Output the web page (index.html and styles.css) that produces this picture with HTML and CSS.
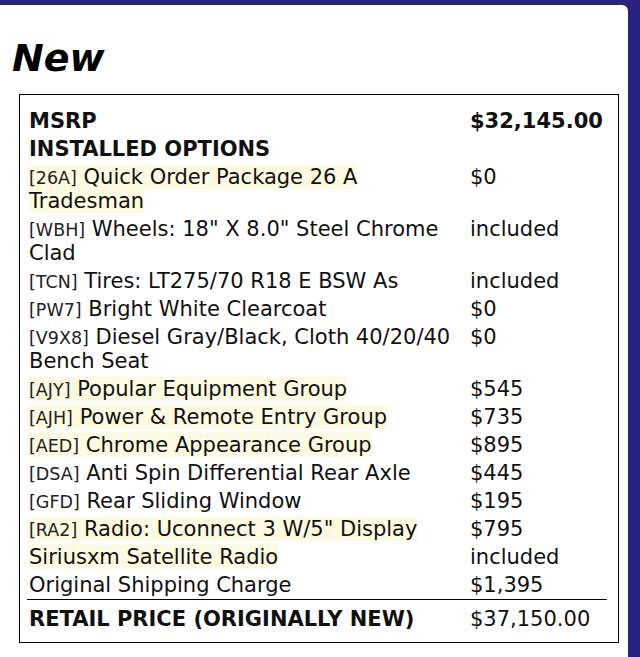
FILE: index.html
```html
<!DOCTYPE html>
<html>
<head>
<meta charset="utf-8">
<link rel="stylesheet" href="styles.css">
</head>
<body>
<div class="panel">
  <h1 class="title">New</h1>
  <div class="box">
    <table class="sticker">
      <tr class="head"><td class="desc">MSRP</td><td class="val">$32,145.00</td></tr>
      <tr class="head"><td class="desc">INSTALLED OPTIONS</td><td class="val"></td></tr>
      <tr><td class="desc"><span class="hl"><span class="code">[26A]</span> Quick Order Package 26 A Tradesman</span></td><td class="val">$0</td></tr>
      <tr><td class="desc"><span class="code">[WBH]</span> Wheels: 18" X 8.0" Steel Chrome Clad</td><td class="val">included</td></tr>
      <tr><td class="desc"><span class="code">[TCN]</span> Tires: LT275/70 R18 E BSW As</td><td class="val">included</td></tr>
      <tr><td class="desc"><span class="code">[PW7]</span> Bright White Clearcoat</td><td class="val">$0</td></tr>
      <tr><td class="desc"><span class="code">[V9X8]</span> Diesel Gray/Black, Cloth 40/20/40 Bench Seat</td><td class="val">$0</td></tr>
      <tr><td class="desc"><span class="hl"><span class="code">[AJY]</span> Popular Equipment Group</span></td><td class="val">$545</td></tr>
      <tr><td class="desc"><span class="hl"><span class="code">[AJH]</span> Power &amp; Remote Entry Group</span></td><td class="val">$735</td></tr>
      <tr><td class="desc"><span class="hl"><span class="code">[AED]</span> Chrome Appearance Group</span></td><td class="val">$895</td></tr>
      <tr><td class="desc"><span class="code">[DSA]</span> Anti Spin Differential Rear Axle</td><td class="val">$445</td></tr>
      <tr><td class="desc"><span class="code">[GFD]</span> Rear Sliding Window</td><td class="val">$195</td></tr>
      <tr><td class="desc"><span class="hl"><span class="code">[RA2]</span> Radio: Uconnect 3 W/5" Display</span></td><td class="val">$795</td></tr>
      <tr><td class="desc"><span class="hl">Siriusxm Satellite Radio</span></td><td class="val">included</td></tr>
      <tr class="ship"><td class="desc">Original Shipping Charge</td><td class="val">$1,395</td></tr>
      <tr class="total"><td class="desc">RETAIL PRICE (ORIGINALLY NEW)</td><td class="val">$37,150.00</td></tr>
    </table>
  </div>
</div>
</body>
</html>
```
FILE: styles.css
```css
html, body {
  margin: 0;
  padding: 0;
  background: #2a2280;
  height: 100%;
  overflow: hidden;
}
body {
  font-family: "DejaVu Sans", "Liberation Sans", sans-serif;
  color: #111;
}
.panel {
  box-sizing: border-box;
  background: #fff;
  margin: 5px 12px 0 0;
  border-radius: 0 6px 0 0;
  height: calc(100vh - 5px);
  padding-top: 31px;
}
.title {
  margin: 0 0 14px 12px;
  font-size: 38px;
  font-weight: bold;
  font-style: italic;
  line-height: 44px;
  color: #000;
}
.box {
  margin-left: 19px;
  width: 580px;
  border: 1px solid #000;
  padding: 12px 11px 9px 7px;
}
.sticker {
  width: 580px;
  border-collapse: collapse;
  font-size: 21px;
  line-height: 24px;
}
.sticker td {
  padding: 2px;
  vertical-align: top;
}
.sticker td.desc {
  width: 437px;
}
.sticker td.val {
  white-space: nowrap;
}
.head td {
  font-weight: bold;
}
.code {
  font-size: 17.5px;
  line-height: 1;
  color: #222;
}
.hl {
  background: #fcfae0;
}
.ship td {
  border-bottom: 1px solid #000;
}
.total td {
  padding-top: 7px;
}
.total td.desc {
  font-weight: bold;
}
```
